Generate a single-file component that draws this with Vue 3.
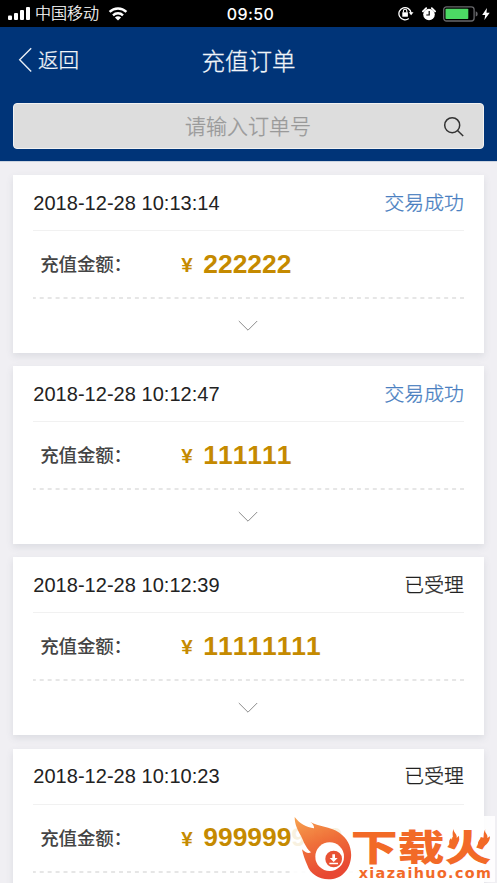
<script setup>
const orders = [
  { time: '2018-12-28 10:13:14', status: '交易成功', done: true, amount: '222222' },
  { time: '2018-12-28 10:12:47', status: '交易成功', done: true, amount: '111111' },
  { time: '2018-12-28 10:12:39', status: '已受理', done: false, amount: '11111111' },
  { time: '2018-12-28 10:10:23', status: '已受理', done: false, amount: '9999999.99' },
]
</script>

<template>
  <div class="screen">
    <div class="status-bar">
      <div class="carrier">
        <svg class="signal" width="23" height="14" viewBox="0 0 23 14" fill="#fff">
          <rect x="0" y="8.5" width="4" height="4.5" rx="1" />
          <rect x="6" y="6" width="4" height="7" rx="1" />
          <rect x="12" y="3" width="4" height="10" rx="1" />
          <rect x="18" y="0" width="4" height="13" rx="1" />
        </svg>
        <span class="carrier-name">中国移动</span>
        <svg class="wifi" width="20" height="14" viewBox="0 0 20 14" fill="none" stroke="#fff" stroke-width="2.4">
          <path d="M1.6 4.9C6.3.3 13.7.3 18.4 4.9" />
          <path d="M5 8.3C7.8 5.6 12.2 5.6 15 8.3" />
          <path d="M10 13.6 6.9 10.5Q10 7.8 13.1 10.5Z" fill="#fff" stroke="none" />
        </svg>
      </div>
      <div class="clock">09:50</div>
      <div class="indicators">
        <svg width="16" height="15" viewBox="0 0 16 15" fill="none" stroke="#fff">
          <path d="M10.8 12.5A6.1 6.1 0 1 1 13.1 7" stroke-width="1.3" />
          <path d="M10.7 6.2h4.8l-2.4 3z" fill="#fff" stroke="none" />
          <rect x="4.3" y="6.3" width="5.6" height="4.4" fill="#fff" stroke="none" />
          <path d="M5.4 6.5V5a1.7 1.7 0 0 1 3.4 0v1.5" stroke-width="1.1" />
        </svg>
        <svg class="alarm" width="14" height="14" viewBox="0 0 14 14">
          <circle cx="7" cy="7.5" r="5.8" fill="#fff" />
          <path d="M.9 4.3 4.2 1.2M13.1 4.3 9.8 1.2" stroke="#fff" stroke-width="1.8" stroke-linecap="round" />
          <path d="M7.2 4v4H4.3" fill="none" stroke="#000" stroke-width="1.2" />
        </svg>
        <svg class="battery" width="36" height="16" viewBox="0 0 36 16">
          <rect x=".7" y=".8" width="30.4" height="14.2" rx="2.8" fill="none" stroke="#68686b" stroke-width="1.3" />
          <rect x="2.5" y="2.7" width="22.8" height="10.4" rx=".8" fill="#4cd964" />
          <path d="M32.7 5.2q2 .6 2 2.7t-2 2.7z" fill="#68686b" />
        </svg>
        <svg class="bolt" width="8" height="12" viewBox="0 0 8 12">
          <path d="M4.9 0 .2 6.9h3L2.4 12 7.7 4.8H4.5z" fill="#fff" />
        </svg>
      </div>
    </div>

    <header class="header">
      <div class="nav">
        <div class="back">
          <svg width="15" height="26" viewBox="0 0 15 26" fill="none" stroke="#e6edf5" stroke-width="1.4">
            <path d="M13.2 1.3 1.7 12.8 13.2 24.4" />
          </svg>
          <span class="back-text">返回</span>
        </div>
        <h1 class="title">充值订单</h1>
      </div>
      <div class="search">
        <span>请输入订单号</span>
        <svg class="search-icon" width="22" height="22" viewBox="0 0 22 22" fill="none" stroke="#333" stroke-width="1.5">
          <circle cx="9.2" cy="9.2" r="7.5" />
          <path d="M14.5 14.5 20.2 20" />
        </svg>
      </div>
    </header>

    <main class="list">
      <section v-for="order in orders" :key="order.time" class="card">
        <div class="card-head">
          <span class="time">{{ order.time }}</span>
          <span class="state" :class="{ done: order.done }">{{ order.status }}</span>
        </div>
        <div class="card-body">
          <span class="label">充值金额：</span>
          <span class="yen">¥</span>
          <span class="amount">{{ order.amount }}</span>
        </div>
        <svg class="divider" width="431" height="2" viewBox="0 0 431 2">
          <path d="M0 1H431" stroke="#dedede" stroke-width="1.5" stroke-dasharray="4 3.93" stroke-dashoffset="1.2" />
        </svg>
        <div class="card-foot">
          <svg width="20" height="12" viewBox="0 0 20 12" fill="none" stroke="#8c8c8c" stroke-width="1">
            <path d="M.8 1 10 10.2 19.2 1" />
          </svg>
        </div>
      </section>
    </main>

    <div class="brand">
      <svg width="205" height="66" viewBox="31 49 615 198">
        <defs>
          <linearGradient id="flame" x1="0" y1="0" x2="0.35" y2="1">
            <stop offset="0" stop-color="#f7a04a" />
            <stop offset="0.5" stop-color="#ef6a32" />
            <stop offset="1" stop-color="#e8412b" />
          </linearGradient>
        </defs>
        <path
          d="M45 52C60 72 80 82 103 86C104 79 100 73 92 67C116 81 151 80 179 99C205 117 217 144 214 174C210 212 184 239 147 239C116 239 91 222 83 197C76 181 70 165 67 149C77 159 86 163 94 158C77 143 72 125 64 109C54 90 45 75 45 52Z"
          fill="url(#flame)"
        />
        <circle cx="150" cy="171" r="43" fill="#fff" />
        <circle cx="162" cy="178" r="25" fill="#e84b2c" />
        <path d="M158 164h8v11h8l-12 12-12-12h8zM149 189h26v5h-26z" fill="#fff" />
        <g fill="#f2641f">
          <text class="brand-name" x="213" y="184" textLength="422" lengthAdjust="spacingAndGlyphs">下载火</text>
          <path d="M522 87C520 98 534 103 531 115L538 108C540 124 533 138 516 143C506 133 507 122 514 116L518 123C523 111 515 103 522 87Z" />
          <path d="M617 89C613 101 626 103 623 115L631 110C631 128 617 142 597 143C592 133 595 124 604 116L607 123C616 112 608 104 617 89Z" />
          <text class="brand-url" x="237" y="235" textLength="397" lengthAdjust="spacing">xiazaihuo.com</text>
        </g>
      </svg>
    </div>
  </div>
</template>

<style>
body {
  overflow: hidden;
}
</style>

<style scoped>
.screen {
  position: relative;
  width: 497px;
  height: 883px;
  overflow: hidden;
  background: #f0eff3;
  font-family: "Liberation Sans", "Noto Sans CJK SC", sans-serif;
  color: #222;
}
.status-bar {
  display: grid;
  grid-template-columns: 1fr auto 1fr;
  align-items: center;
  height: 27px;
  padding: 0 7px 0 8px;
  background: #000;
  color: #fff;
}
.carrier,
.indicators {
  display: flex;
  align-items: center;
}
.carrier-name {
  padding-top: 1px;
  margin-left: 4px;
  font-size: 16px;
  font-weight: 300;
  line-height: 26px;
  -webkit-text-stroke: 0.2px currentColor;
}
.wifi {
  margin-left: 9px;
}
.clock {
  padding-top: 1px;
  font-family: Inter, sans-serif;
  font-size: 16px;
  font-weight: 500;
  letter-spacing: 0.4px;
  margin-left: 3px;
}
.indicators {
  justify-content: flex-end;
}
.alarm {
  margin-left: 8px;
}
.battery {
  margin-left: 7px;
}
.bolt {
  margin-left: 3px;
}
.header {
  height: 134px;
  padding: 0 13px;
  background: #003478;
  border-bottom: 1px solid #cbd3df;
  box-sizing: content-box;
}
.nav {
  display: grid;
  grid-template-columns: 1fr auto 1fr;
  align-items: center;
  height: 76px;
  box-sizing: border-box;
  padding-bottom: 11px;
}
.back {
  display: flex;
  align-items: center;
  gap: 5px;
  padding-left: 5px;
  color: #f2f5f9;
  font-size: 20.5px;
  font-weight: 300;
  -webkit-text-stroke: 0.3px currentColor;
}
.back-text {
  padding-bottom: 2px;
}
.title {
  margin: 0;
  color: #f2f5f9;
  font-size: 23.5px;
  font-weight: 300;
  -webkit-text-stroke: 0.3px currentColor;
}
.search {
  position: relative;
  display: flex;
  align-items: center;
  justify-content: center;
  height: 46px;
  box-sizing: border-box;
  padding: 0 1px 2px 0;
  border: 1px solid #f2f2f2;
  border-radius: 4px;
  background: #ddd;
  color: #999;
  font-size: 21px;
  font-weight: 300;
  -webkit-text-stroke: 0.3px currentColor;
}
.search-icon {
  position: absolute;
  right: 18px;
  top: 12px;
}
.list {
  display: flex;
  flex-direction: column;
  gap: 13.2px;
  padding: 13px 13.3px 0;
}
.card {
  display: flex;
  flex-direction: column;
  flex: none;
  height: 178px;
  box-sizing: border-box;
  padding: 0 20px;
  background: #fff;
  box-shadow: 0 3px 7px rgba(80, 90, 110, 0.13);
}
.card-head {
  display: flex;
  align-items: center;
  justify-content: space-between;
  height: 56px;
  box-sizing: border-box;
  border-bottom: 1px solid #f1f1f1;
}
.time {
  padding-top: 1px;
  font-size: 20px;
  letter-spacing: 0.03px;
}
.state {
  padding-bottom: 3px;
  font-size: 19.8px;
  font-weight: 300;
  -webkit-text-stroke: 0.3px currentColor;
}
.state.done {
  color: #4a7fc1;
}
.card-body {
  display: flex;
  align-items: center;
  height: 66px;
}
.label {
  width: 142px;
  box-sizing: border-box;
  padding: 0 0 2px 7px;
  color: #444;
  font-size: 18.5px;
  font-weight: 500;
  letter-spacing: -0.2px;
  white-space: nowrap;
}
.yen {
  width: 28px;
  box-sizing: border-box;
  padding: 2px 0 0 6px;
  color: #c58a00;
  font-size: 20.5px;
  font-weight: 700;
}
.label,
.yen,
.amount {
  flex: none;
}
.amount {
  color: #c58a00;
  font-size: 26.4px;
  font-weight: 700;
  font-kerning: none;
}
.divider {
  display: block;
}
.card-foot {
  display: flex;
  justify-content: center;
  padding: 21px 1px 0 0;
}
.card-foot svg {
  display: block;
}
.brand {
  position: absolute;
  left: 291px;
  top: 816px;
  width: 204px;
  height: 66px;
  background: rgba(255, 255, 255, 0.88);
}
.brand svg {
  display: block;
  margin-left: -1px;
  opacity: 0.96;
}
.brand-name {
  font-family: "Noto Sans CJK SC", sans-serif;
  font-size: 110px;
  font-weight: 900;
}
.brand-url {
  font-family: "DejaVu Sans", sans-serif;
  font-size: 43px;
  font-weight: 700;
}
</style>
